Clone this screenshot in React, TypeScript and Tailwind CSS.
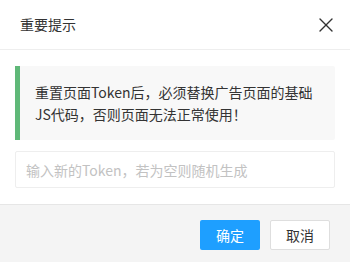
import { X } from "lucide-react";

export default function App() {
  return (
    <div
      className="w-[350px] h-[262px] bg-white flex flex-col text-[14px] text-[#333]"
      style={{ fontFamily: '"Noto Sans CJK SC", "Noto Sans", sans-serif' }}
    >
      <div className="h-[50px] border-b border-[#eee] flex items-center justify-between pl-5 pr-[12px] shrink-0">
        <span className="text-[14px] text-[#333]">重要提示</span>
        <X className="w-[24px] h-[24px] text-[#333]" strokeWidth={1.4} />
      </div>

      <div className="px-[15px] pt-4 pb-[16px] flex flex-col gap-[11px]">
        <div className="bg-[#f8f8f8] border-l-[5px] border-[#5fb878] rounded-r-[2px] py-[15px] pl-[15px] pr-[15px] leading-[22px] text-[#333]">
          重置页面Token后，必须替换广告页面的基础JS代码，否则页面无法正常使用！
        </div>
        <input
          className="h-[37px] border border-[#eee] rounded-[2px] px-[10px] text-[14px] outline-none placeholder:text-[#c2c2c2]"
          placeholder="输入新的Token，若为空则随机生成"
        />
      </div>

      <div className="flex-1 bg-[#f4f4f4] border-t border-[#e6e6e6] flex justify-end items-start gap-[10px] pt-[15px] pr-5">
        <button className="w-[60px] h-[30px] rounded-[2px] bg-[#1e9fff] text-white text-[14px]">
          确定
        </button>
        <button className="w-[60px] h-[30px] rounded-[2px] bg-white border border-[#dedede] text-[#333] text-[14px]">
          取消
        </button>
      </div>
    </div>
  );
}
